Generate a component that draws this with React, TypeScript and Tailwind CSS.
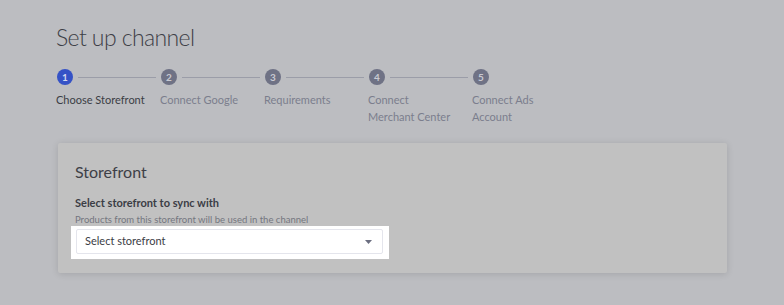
const steps = [
  { n: 1, lines: ["Choose Storefront"] },
  { n: 2, lines: ["Connect Google"] },
  { n: 3, lines: ["Requirements"] },
  { n: 4, lines: ["Connect", "Merchant Center"] },
  { n: 5, lines: ["Connect Ads", "Account"] },
];

function Stepper({ active }: { active: number }) {
  return (
    <div className="flex mt-[18px] ml-px">
      {steps.map((s, i) => {
        const isActive = s.n === active;
        const last = i === steps.length - 1;
        return (
          <div key={s.n} className="w-[104px] shrink-0">
            <div className="flex items-center h-[16px]">
              <span
                className={
                  isActive
                    ? "size-[16px] rounded-full bg-[#3552c6] text-[#d4d8ef] text-[10px] font-bold flex items-center justify-center"
                    : "size-[16px] rounded-full bg-[#6f7285] text-[#c9cad2] text-[10px] font-bold flex items-center justify-center"
                }
              >
                {s.n}
              </span>
              {!last && <span className="flex-1 h-px bg-[#9b9da8] ml-[5px] mr-[5px]" />}
            </div>
            <p
              className={
                isActive
                  ? "mt-[6px] -ml-px text-[11px] leading-[17px] text-[#3b3d45]"
                  : "mt-[6px] -ml-px text-[11px] leading-[17px] text-[#7b7e8d]"
              }
            >
              {s.lines.map((l) => (
                <span key={l} className="block whitespace-nowrap">
                  {l}
                </span>
              ))}
            </p>
          </div>
        );
      })}
    </div>
  );
}

export default function App() {
  return (
    <div
      className="min-h-screen bg-[#bcbdc1] pl-[56px] pr-[57px] pt-[23px]"
      style={{ fontFamily: "Lato, 'Open Sans', sans-serif" }}
    >
      <h1 className="text-[23px] font-light leading-[28px] tracking-[-0.6px] text-[#3e4047]">
        Set up channel
      </h1>
      <Stepper active={1} />

      <div className="mt-[18px] ml-[2px] w-[669px] h-[130px] bg-[#c1c1c1] rounded-[2px] shadow-[0_1px_7px_rgba(0,0,0,0.13)] px-[17px] pt-[19px]">
        <h2 className="text-[16px] leading-[20px] text-[#3e4047]">Storefront</h2>
        <p className="mt-[14px] text-[11px] font-bold leading-[14px] text-[#3b3d45]">
          Select storefront to sync with
        </p>
        <p className="mt-[3px] text-[9.5px] leading-[13px] text-[#74767f]">
          Products from this storefront will be used in the channel
        </p>
        <div className="-ml-[4px] w-[318px] bg-white pt-[3px] pb-[5px] pl-[5px] pr-[6px]">
          <div className="h-[25px] rounded-[2px] border border-[#e4e5ec] flex items-center justify-between pl-[8px] pr-[10px]">
            <span className="text-[11px] text-[#3b3d45]">Select storefront</span>
            <svg width="7" height="4" viewBox="0 0 7 4" aria-hidden="true">
              <path d="M0 0h7L3.5 4z" fill="#6b6e80" />
            </svg>
          </div>
        </div>
      </div>
    </div>
  );
}
